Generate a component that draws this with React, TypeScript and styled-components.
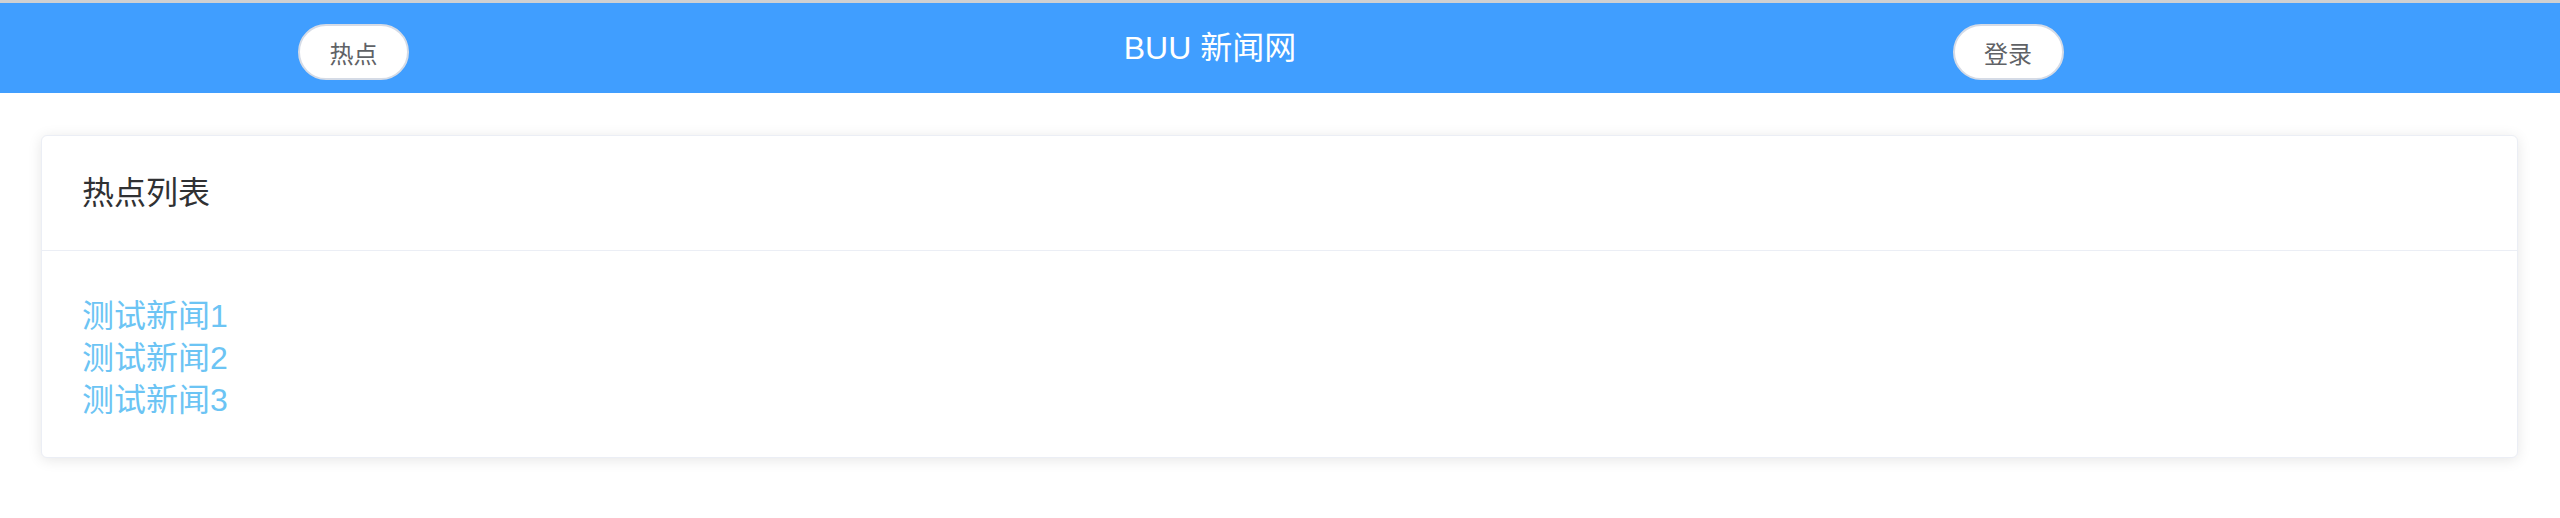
import React from 'react'
import styled, { createGlobalStyle } from 'styled-components'

const GlobalStyle = createGlobalStyle`
  body {
    margin: 0;
    background: #fff;
    font-family: 'Liberation Sans', 'Noto Sans CJK SC', sans-serif;
  }
`

const Header = styled.header`
  display: grid;
  grid-template-columns: 707px 1006px 590px 1fr;
  align-items: center;
  justify-items: center;
  height: 90px;
  border-top: 3px solid #cfd0d2;
  background: #409eff;
`

const Title = styled.h1`
  margin: 0;
  color: #fff;
  font-size: 32px;
  font-weight: normal;
  line-height: 40px;
`

const PillButton = styled.button`
  width: 111px;
  height: 56px;
  margin-top: 8px;
  border: 2px solid #d5dbe6;
  border-radius: 28px;
  background: #fff;
  color: #606266;
  font-family: inherit;
  font-size: 24px;
  cursor: pointer;
`

const Main = styled.main`
  padding: 42px 42px 41px 41px;
`

const Card = styled.section`
  border: 1px solid #ebeef5;
  border-radius: 6px;
  background: #fff;
  box-shadow: 0 2px 14px 0 rgba(0, 0, 0, 0.1);
  overflow: hidden;
`

const CardHeader = styled.div`
  padding: 36px 40px;
  border-bottom: 1px solid #ebeef5;
  color: #303133;
  font-size: 32px;
  line-height: 42px;
`

const CardBody = styled.div`
  padding: 44px 40px 36px;
`

const NewsLink = styled.a`
  display: block;
  color: #6cc4f4;
  font-size: 32px;
  line-height: 42px;
  text-decoration: none;
`

const news = ['测试新闻1', '测试新闻2', '测试新闻3']

const App = () => {
  return (
    <>
      <GlobalStyle />
      <Header>
        <PillButton>热点</PillButton>
        <Title>BUU 新闻网</Title>
        <PillButton>登录</PillButton>
      </Header>
      <Main>
        <Card>
          <CardHeader>热点列表</CardHeader>
          <CardBody>
            {news.map((n) => (
              <NewsLink key={n} href="#">
                {n}
              </NewsLink>
            ))}
          </CardBody>
        </Card>
      </Main>
    </>
  )
}

export default App
